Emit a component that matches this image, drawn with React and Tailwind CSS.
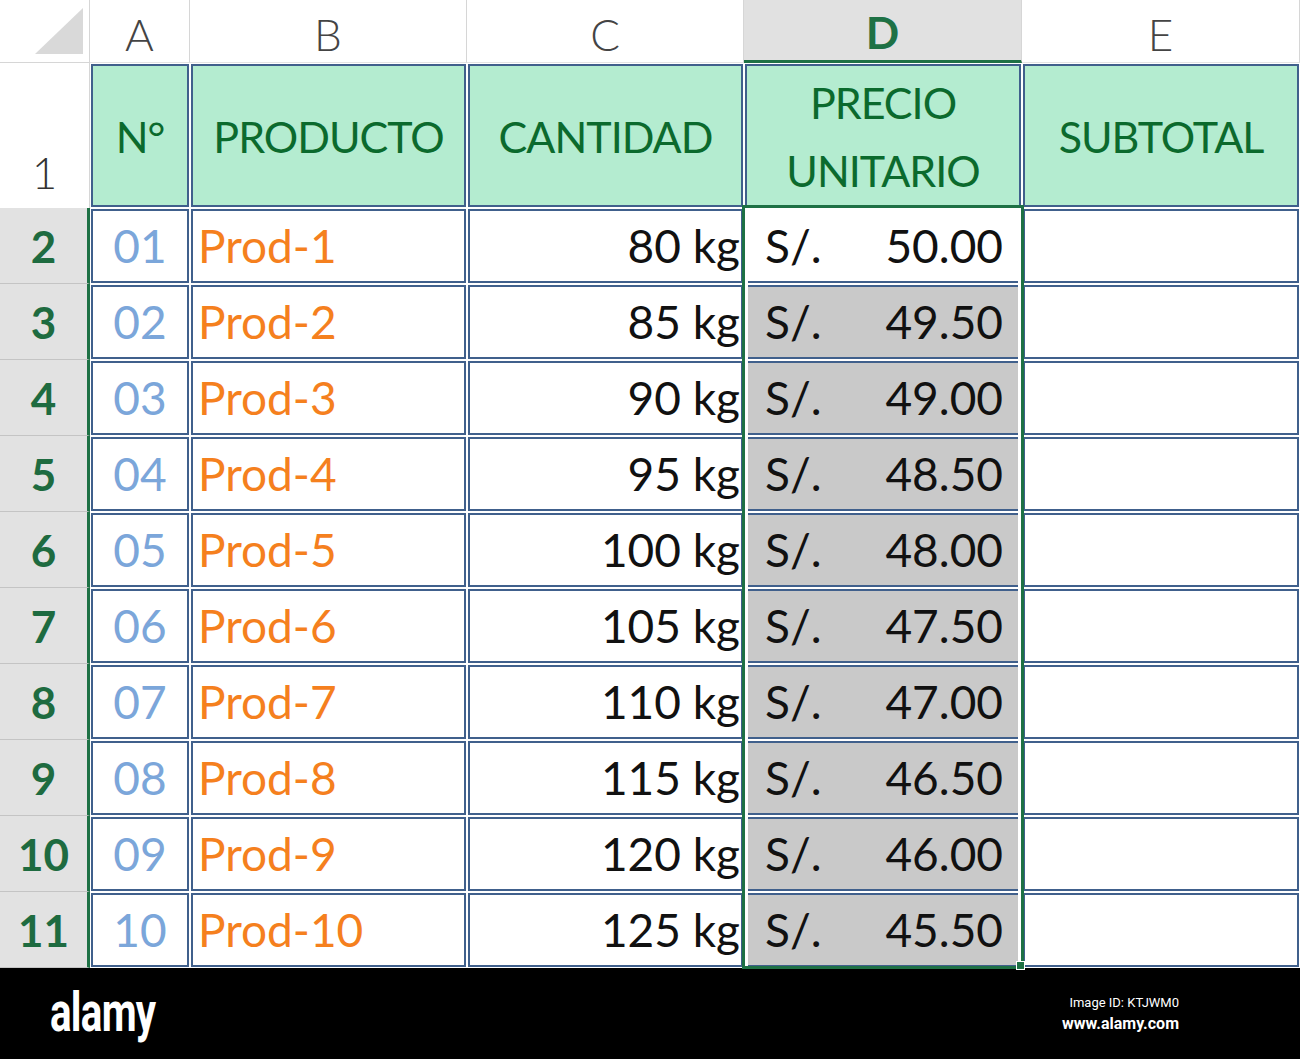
import React from "react";

const rows = [
  ["01", "Prod-1", "80 kg", "50.00"],
  ["02", "Prod-2", "85 kg", "49.50"],
  ["03", "Prod-3", "90 kg", "49.00"],
  ["04", "Prod-4", "95 kg", "48.50"],
  ["05", "Prod-5", "100 kg", "48.00"],
  ["06", "Prod-6", "105 kg", "47.50"],
  ["07", "Prod-7", "110 kg", "47.00"],
  ["08", "Prod-8", "115 kg", "46.50"],
  ["09", "Prod-9", "120 kg", "46.00"],
  ["10", "Prod-10", "125 kg", "45.50"],
];

function Cell({ className = "", children }) {
  return (
    <div className="p-px bg-white">
      <div className={"h-full border-2 border-[#40608c] " + className}>{children}</div>
    </div>
  );
}

function ColHead({ children, active }) {
  return (
    <div
      className={
        "flex items-end justify-center pb-[6px] border-r border-[#d6d6d6] text-[44px] leading-none " +
        (active
          ? "bg-[#e1e1e1] border-b-[3px] border-b-[#1e7145] text-[#1e7145] font-bold"
          : "bg-white text-[#444] border-b border-b-[#e4e4e4] font-light")
      }
    >
      {children}
    </div>
  );
}

const head =
  "bg-[#b4ecd0] flex items-center justify-center text-[#0b6a2d] text-[43px] tracking-[-1px] leading-none";

export default function App() {
  return (
    <div className="relative w-[1300px] h-[1059px] bg-white overflow-hidden font-['Lato',sans-serif]">
      <div className="grid grid-cols-[90px_100px_277px_277px_278px_278px] grid-rows-[63px_145px_repeat(10,76px)]">
        {/* corner */}
        <div className="flex items-end justify-end pb-[8px] pr-[6px] border-r border-b border-[#d6d6d6] bg-white">
          <svg width="48" height="46" viewBox="0 0 48 46">
            <polygon points="48,0 48,46 0,46" fill="#d9d9d9" />
          </svg>
        </div>
        <ColHead>A</ColHead>
        <ColHead>B</ColHead>
        <ColHead>C</ColHead>
        <ColHead active>D</ColHead>
        <ColHead>E</ColHead>

        {/* row 1 */}
        <div className="flex items-end justify-center pb-[14px] bg-white border-r border-[#d6d6d6] text-[44px] leading-none font-light text-[#333]">
          1
        </div>
        <Cell className={head + " pt-[2px]"}>N°</Cell>
        <Cell className={head + " pt-[2px]"}>PRODUCTO</Cell>
        <Cell className={head + " pt-[2px]"}>CANTIDAD</Cell>
        <Cell className="bg-[#b4ecd0] flex flex-col items-center justify-center text-[#0b6a2d] text-[43px] tracking-[-1px] leading-[68px] pt-[2px]">
          <span>PRECIO</span>
          <span>UNITARIO</span>
        </Cell>
        <Cell className={head + " pt-[2px]"}>SUBTOTAL</Cell>

        {rows.map((r, i) => (
          <React.Fragment key={i}>
            <div className="flex items-end justify-center pb-[15px] bg-[#e2e2e2] border-b border-[#c4c4c4] border-r-[3px] border-r-[#1e7145] text-[44px] leading-none font-bold text-[#1e6b40]">
              {i + 2}
            </div>
            <Cell className="flex items-end justify-center pb-[12px] text-[46px] leading-none text-[#7ba6da]">
              {r[0]}
            </Cell>
            <Cell className="flex items-end justify-start pl-[5px] pb-[12px] text-[46px] leading-none text-[#f5801e]">
              {r[1]}
            </Cell>
            <Cell className="flex items-end justify-end pr-[1px] pb-[12px] text-[46px] leading-none text-[#111]">
              {r[2]}
            </Cell>
            <div className="px-[4px] py-px bg-white">
              <div
                className={
                  "h-full flex items-end justify-between pl-[17px] pr-[15px] pb-[12px] text-[46px] leading-none text-[#111] " +
                  (i === 0
                    ? "bg-white border-b-2 border-[#40608c]"
                    : "bg-[#c9c9c9] border-y-2 border-[#40608c]")
                }
              >
                <span>S/.</span>
                <span>{r[3]}</span>
              </div>
            </div>
            <Cell />
          </React.Fragment>
        ))}
      </div>

      {/* selection overlay */}
      <div className="absolute left-[742px] top-[205px] w-[282px] h-[764px] border-[3px] border-[#1e7145] pointer-events-none" />
      <div className="absolute left-[1016px] top-[961px] w-[9px] h-[9px] bg-[#1e7145] border border-white" />

      {/* footer */}
      <div className="h-[91px] bg-black flex items-center justify-between pl-[50px] pr-[121px]">
        <span className="inline-block origin-left scale-x-[0.72] text-white font-bold text-[56px] leading-none tracking-[-1px] font-['Roboto',sans-serif] -mt-[4px]">
          alamy
        </span>
        <div className="flex flex-col items-end text-white font-['Roboto',sans-serif] mt-[1px]">
          <span className="text-[13px] leading-[20px]">Image ID: KTJWM0</span>
          <span className="text-[16px] leading-[22px] font-bold">www.alamy.com</span>
        </div>
      </div>
    </div>
  );
}
